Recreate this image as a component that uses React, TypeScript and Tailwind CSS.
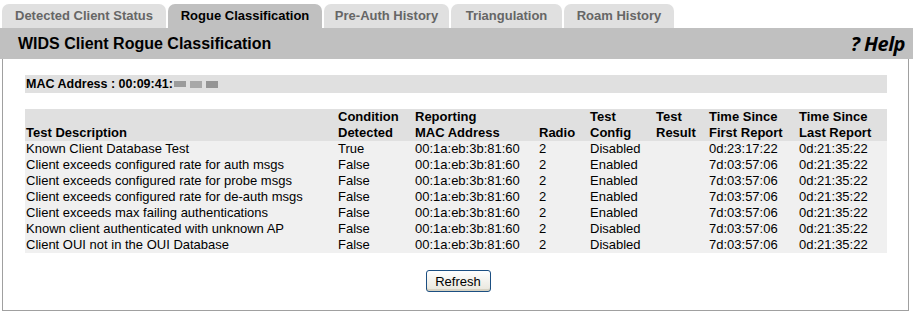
import React from 'react';

const tabs = [
  { label: 'Detected Client Status', w: 'w-[164px]' },
  { label: 'Rogue Classification', w: 'w-[154px]', active: true },
  { label: 'Pre-Auth History', w: 'w-[125px]' },
  { label: 'Triangulation', w: 'w-[111px]' },
  { label: 'Roam History', w: 'w-[110px]' },
];

const cols = [
  { top: '', bottom: 'Test Description', w: 'w-[312px]' },
  { top: 'Condition', bottom: 'Detected', w: 'w-[77px]' },
  { top: 'Reporting', bottom: 'MAC Address', w: 'w-[124px]' },
  { top: '', bottom: 'Radio', w: 'w-[51px]' },
  { top: 'Test', bottom: 'Config', w: 'w-[66px]' },
  { top: 'Test', bottom: 'Result', w: 'w-[53px]' },
  { top: 'Time Since', bottom: 'First Report', w: 'w-[90px]' },
  { top: 'Time Since', bottom: 'Last Report', w: 'w-[89px]' },
];

const rows = [
  ['Known Client Database Test', 'True', 'Disabled', '0d:23:17:22'],
  ['Client exceeds configured rate for auth msgs', 'False', 'Enabled', '7d:03:57:06'],
  ['Client exceeds configured rate for probe msgs', 'False', 'Enabled', '7d:03:57:06'],
  ['Client exceeds configured rate for de-auth msgs', 'False', 'Enabled', '7d:03:57:06'],
  ['Client exceeds max failing authentications', 'False', 'Enabled', '7d:03:57:06'],
  ['Known client authenticated with unknown AP', 'False', 'Disabled', '7d:03:57:06'],
  ['Client OUI not in the OUI Database', 'False', 'Disabled', '7d:03:57:06'],
];

export default function App() {
  return (
    <div className="w-[913px] h-[314px] bg-white font-['Liberation_Sans',Arial,sans-serif] text-black overflow-hidden">
      {/* tabs */}
      <div className="flex items-end gap-[2px] pl-[2px] pt-[4px] h-[28px]">
        {tabs.map((t) => (
          <div
            key={t.label}
            className={`${t.w} h-[24px] rounded-t-[7px] flex items-center justify-center text-[13px] font-bold ${
              t.active ? 'bg-[#c0c0c0] text-black' : 'bg-[#e0e0e0] text-[#666666]'
            }`}
          >
            {t.label}
          </div>
        ))}
      </div>

      {/* title bar */}
      <div className="h-[31px] bg-[#c0c0c0] flex items-center justify-between pl-[18px] pr-[8px]">
        <span className="text-[16px] font-bold">WIDS Client Rogue Classification</span>
        <span className="text-[20px] font-bold italic font-['Open_Sans',sans-serif] tracking-[-0.5px]">? Help</span>
      </div>

      {/* panel */}
      <div className="ml-[2px] w-[907px] h-[252px] border-x border-b border-[#a0a0a0] pl-[22px] pt-[16px]">
        <div className="w-[862px] h-[18px] bg-[#e0e0e0] flex items-center text-[12.5px] font-bold">
          <span className="pl-[1px]">MAC Address : 00:09:41:</span>
          <span className="flex items-center gap-[4px] ml-[1px]">
            <span className="w-[12px] h-[6px] bg-[#8a8a8a] opacity-80" />
            <span className="w-[12px] h-[7px] bg-[#a8a8a8]" />
            <span className="w-[12px] h-[7px] bg-[#959595]" />
          </span>
        </div>

        <div className="mt-[16px] w-[862px] text-[13px] leading-[16px]">
          <div className="flex bg-[#e0e0e0] h-[32px] font-bold">
            {cols.map((c) => (
              <div key={c.bottom} className={`${c.w} pl-[1px] flex flex-col justify-end`}>
                <span>{c.top}</span>
                <span>{c.bottom}</span>
              </div>
            ))}
          </div>
          {rows.map((r) => (
            <div key={r[0]} className="flex bg-[#f0f0f0] h-[16px]">
              <div className="w-[312px] pl-[1px]">{r[0]}</div>
              <div className="w-[77px] pl-[1px]">{r[1]}</div>
              <div className="w-[124px] pl-[1px]">00:1a:eb:3b:81:60</div>
              <div className="w-[51px] pl-[1px]">2</div>
              <div className="w-[66px] pl-[1px]">{r[2]}</div>
              <div className="w-[53px] pl-[1px]"></div>
              <div className="w-[90px] pl-[1px]">{r[3]}</div>
              <div className="w-[89px] pl-[1px]">0d:21:35:22</div>
            </div>
          ))}
        </div>

        <div className="w-[862px] flex justify-center mt-[17px] pl-[4px]">
          <button className="w-[65px] h-[22px] rounded-[3px] border border-[#1c4f82] bg-gradient-to-b from-white to-[#e8e6dc] text-[13px] leading-none shadow-[inset_0_-2px_0_#d6d2c2]">
            Refresh
          </button>
        </div>
      </div>
    </div>
  );
}
